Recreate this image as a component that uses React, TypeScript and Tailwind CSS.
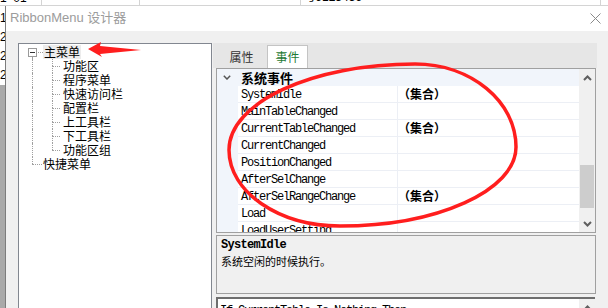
const treeChildren = ['功能区', '程序菜单', '快速访问栏', '配置栏', '上工具栏', '下工具栏', '功能区组']

const events: Array<{ name: string; value?: string }> = [
  { name: 'SystemIdle', value: '（集合）' },
  { name: 'MainTableChanged' },
  { name: 'CurrentTableChanged', value: '（集合）' },
  { name: 'CurrentChanged' },
  { name: 'PositionChanged' },
  { name: 'AfterSelChange' },
  { name: 'AfterSelRangeChange', value: '（集合）' },
  { name: 'Load' },
  { name: 'LoadUserSetting' },
]

const cjk = "font-['Noto_Sans_CJK_SC',sans-serif]"
const mono = "font-['Liberation_Mono','Noto_Sans_CJK_SC',monospace]"
const dot = 'border-dotted border-[#a0a0a0]'

// tree connector cells, 20px wide, line at x=9
const Pipe = () => (
  <div className="h-full w-5 shrink-0 pl-[9px]">
    <div className={`h-full border-l ${dot}`} />
  </div>
)

const Branch = ({ last }: { last?: boolean }) => (
  <div className="flex h-full w-5 shrink-0 flex-col pl-[9px]">
    <div className={`h-[7px] border-l ${dot}`} />
    <div className={`h-[7px] w-[8px] border-t ${last ? '' : 'border-l'} ${dot}`} />
  </div>
)

const Chevron = ({ up }: { up?: boolean }) => (
  <svg width="9" height="6" viewBox="0 0 9 6">
    <path
      d={up ? 'M1 5 L4.5 1.5 L8 5' : 'M1 1 L4.5 4.5 L8 1'}
      stroke="#5f5f5f"
      strokeWidth="2"
      fill="none"
    />
  </svg>
)

const App = () => {
  return (
    <div className="relative flex h-[308px] w-[608px] flex-col overflow-hidden bg-white">
      {/* spreadsheet behind the dialog */}
      <div className="flex h-[6px] shrink-0 overflow-hidden border-b border-[#d4d4d4] font-['Liberation_Sans','Noto_Sans_CJK_SC',sans-serif] text-[12px] leading-[14px] text-black">
        <div className="w-[42px] shrink-0 border-r border-[#d4d4d4]">
          <div className="-mt-[9px] whitespace-pre">1  01</div>
        </div>
        <div className="w-[98px] shrink-0 border-r border-[#d4d4d4]" />
        <div className="w-[161px] shrink-0 border-r border-[#d4d4d4]" />
        <div className="w-[300px] shrink-0 border-r border-[#d4d4d4] pl-[3px]">
          <div className="-mt-[10px]">号J123456</div>
        </div>
      </div>

      <div className="flex flex-1">
        <div className="flex w-[5px] shrink-0 flex-col overflow-hidden">
          <div className="h-[79px] shrink-0 bg-white pt-[3px] font-['Liberation_Sans',sans-serif] text-[12px] leading-[19px] text-black">
            <div>1</div>
            <div>2</div>
            <div>2</div>
            <div>2</div>
          </div>
          <div className="flex-1 bg-[#a9a9a9]" />
        </div>

        <div className="flex flex-1 flex-col border-l border-[#7c7c7c]">
          {/* title bar */}
          <div className="flex h-[25px] shrink-0 items-center justify-between bg-white pl-[4px] pr-[7px]">
            <span className="pb-[2px] font-['Liberation_Sans','Noto_Sans_CJK_SC',sans-serif] text-[13px] text-[#9c9c9c]">
              RibbonMenu 设计器
            </span>
            <svg width="11" height="11" viewBox="0 0 11 11">
              <path d="M0.5 0.5 L10.5 10.5 M10.5 0.5 L0.5 10.5" stroke="#8a8a8a" strokeWidth="1" />
            </svg>
          </div>

          <div className="flex flex-1 bg-[#f0f0f0] pt-[12px]">
            {/* tree */}
            <div
              className={`ml-[12px] h-[280px] w-[194px] shrink-0 border border-[#828790] bg-white pl-[4px] pt-[1px] text-[12px] leading-[14px] text-black ${cjk}`}
            >
              <div className="flex h-[14px]">
                <div className="flex h-full w-5 shrink-0 flex-col pl-[5px] pt-[3px]">
                  <div className="flex items-center">
                    <div className="flex h-[9px] w-[9px] items-center justify-center border border-[#9a9a9a] bg-white">
                      <div className="h-px w-[5px] bg-[#333]" />
                    </div>
                    <div className={`ml-px w-[5px] border-t ${dot}`} />
                  </div>
                  <div className={`ml-[4px] flex-1 border-l ${dot}`} />
                </div>
                <span className="block h-[14px] bg-[#ececec] px-px">主菜单</span>
              </div>
              {treeChildren.map((label, i) => (
                <div key={label} className="flex h-[14px]">
                  <Pipe />
                  <Branch last={i === treeChildren.length - 1} />
                  <span className="block h-[14px]">{label}</span>
                </div>
              ))}
              <div className="flex h-[14px]">
                <div className="flex h-full w-5 shrink-0 flex-col pl-[9px]">
                  <div className={`h-[7px] border-l ${dot}`} />
                  <div className={`w-[10px] border-t ${dot}`} />
                </div>
                <span className="block h-[14px]">快捷菜单</span>
              </div>
            </div>

            {/* right panel */}
            <div className="ml-px flex w-[384px] shrink-0 flex-col">
              <div className={`flex h-[25px] shrink-0 items-end bg-[#e6e6e6] pl-[3px] text-[12px] ${cjk}`}>
                <div className="flex h-[23px] w-[51px] items-center justify-center text-[#333]">属性</div>
                <div className="flex h-[23px] w-[41px] items-center justify-center border-x border-t border-[#c4c4c4] bg-white text-[#1f7a36]">
                  事件
                </div>
              </div>

              {/* property grid */}
              <div className="ml-[3px] flex h-[165px] w-[380px] shrink-0 overflow-hidden border border-[#a0a0a0] bg-white">
                <div className="flex flex-1 flex-col overflow-hidden">
                  <div className="flex h-[17px] shrink-0 items-center bg-[#f1f5fb]">
                    <div className="flex w-[24px] shrink-0 pl-[6px]">
                      <svg width="8" height="5" viewBox="0 0 8 5">
                        <path d="M0.8 0.8 L4 4 L7.2 0.8" stroke="#555" strokeWidth="1.5" fill="none" />
                      </svg>
                    </div>
                    <span className={`text-[13px] font-bold text-black ${cjk}`}>系统事件</span>
                  </div>
                  {events.map(ev => (
                    <div key={ev.name} className="flex h-[17px] shrink-0">
                      <div className="w-[21px] shrink-0 bg-[#f1f5fb]" />
                      <div
                        className={`flex w-[160px] shrink-0 items-center border-b border-r border-[#eceff5] pl-[3px] pt-[1px] text-[12px] tracking-[-1.2px] text-black ${mono}`}
                      >
                        {ev.name}
                      </div>
                      <div
                        className={`flex flex-1 items-center border-b border-[#eceff5] text-[12px] font-bold text-black ${cjk}`}
                      >
                        {ev.value}
                      </div>
                    </div>
                  ))}
                </div>
                <div className="flex w-[16px] shrink-0 flex-col bg-[#f0f0f0]">
                  <div className="flex h-[17px] items-center justify-center">
                    <Chevron up />
                  </div>
                  <div className="flex-1">
                    <div className="mx-px mt-[79px] h-[43px] bg-[#cdcdcd]" />
                  </div>
                  <div className="flex h-[17px] items-center justify-center">
                    <Chevron />
                  </div>
                </div>
              </div>

              {/* description */}
              <div className="ml-[3px] mt-[2px] h-[59px] w-[380px] shrink-0 border border-[#a0a0a0] bg-[#f0f0f0] pl-[4px] pt-[1px] leading-[16px] text-black">
                <div className={`text-[12px] font-bold tracking-[-0.7px] ${mono}`}>SystemIdle</div>
                <div className={`text-[11px] ${cjk}`}>系统空闲的时候执行。</div>
              </div>

              {/* code box */}
              <div className="ml-[3px] mt-[3px] flex w-[379px] flex-1 border-l-2 border-t-2 border-[#6e6e6e] bg-white">
                <div className={`flex-1 pl-[2px] pt-[5px] text-[12px] leading-[14px] tracking-[-1.2px] text-black ${mono}`}>
                  If CurrentTable Is Nothing Then
                </div>
                <div className="flex w-[16px] shrink-0 justify-center bg-[#f0f0f0] pt-[6px]">
                  <Chevron up />
                </div>
              </div>
            </div>
          </div>
        </div>
      </div>

      {/* red annotations */}
      <svg className="pointer-events-none absolute inset-0" width="608" height="308" viewBox="0 0 608 308">
        <polygon points="88,49 101,42 100,46 141,50 100,54 102,57" fill="#ff1e1e" />
        <path
          d="M415 64 C470.8 64 516 101.2 516 147 C516 190.6 437.2 226 340 226 C278.7 226 229 192 229 150 C229 102.5 312.3 64 415 64 Z"
          stroke="#ff1e1e"
          strokeWidth="3.5"
          fill="none"
        />
      </svg>
    </div>
  )
}

export default App
